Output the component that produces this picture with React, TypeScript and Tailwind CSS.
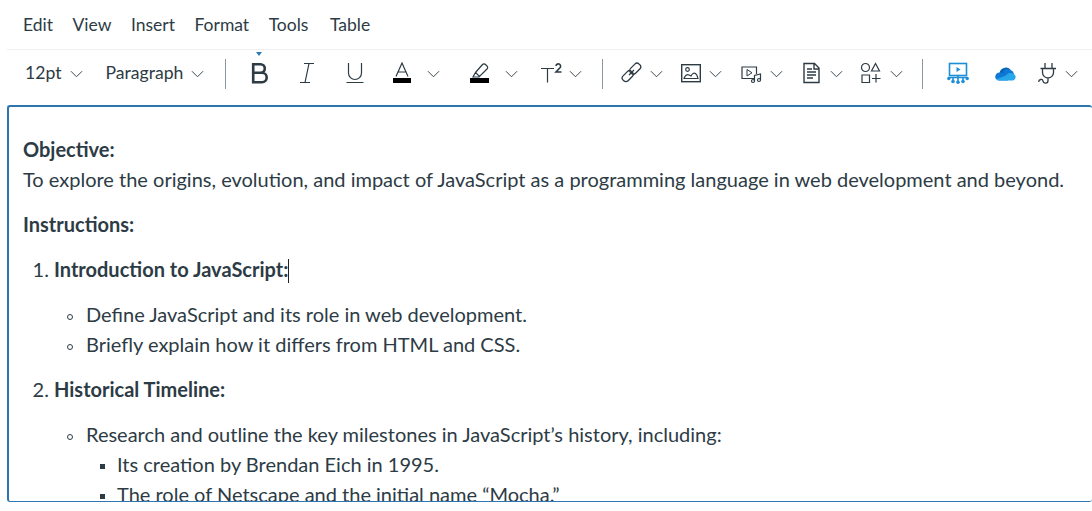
import { ReactNode } from 'react';

const Chevron = ({ className = '' }: { className?: string }) => (
  <svg viewBox="0 0 14 8" className={`w-[13px] h-[8px] shrink-0 ${className}`} fill="none" stroke="#2d3b45" strokeWidth="1">
    <path d="M1 1l6 6 6-6" />
  </svg>
);

const Divider = ({ className = '' }: { className?: string }) => (
  <div className={`w-px h-[30px] bg-[#8b969e] shrink-0 ${className}`} />
);

const Icon = ({ w, children, className = '' }: { w: number; children: ReactNode; className?: string }) => (
  <svg width={w} height={24} viewBox={`0 0 ${w} 24`} fill="none" stroke="#2d3b45" strokeWidth="1.2" className={`shrink-0 ${className}`}>
    {children}
  </svg>
);

// list items with the small bullets the editor draws
const CircleItem = ({ children }: { children: ReactNode }) => (
  <li className="relative list-none">
    <span className="absolute -left-[19px] top-[15px] w-[6px] h-[6px] rounded-full border border-[#2d3b45]" />
    {children}
  </li>
);

const SquareItem = ({ children }: { children: ReactNode }) => (
  <li className="relative list-none">
    <span className="absolute -left-[17px] top-[15px] w-[5px] h-[5px] bg-[#2d3b45]" />
    {children}
  </li>
);

export default function App() {
  return (
    <div className="w-[1092px] h-[511px] overflow-hidden bg-white pl-[7px] text-[#2d3b45] font-['Lato',sans-serif]">
      {/* Menu bar */}
      <div className="h-[50px] border-b border-[#eef0f1] flex items-center pl-[16px] pt-[1px] gap-[19.5px] text-[17.5px]">
        <span>Edit</span>
        <span>View</span>
        <span>Insert</span>
        <span>Format</span>
        <span>Tools</span>
        <span className="ml-[2px]">Table</span>
      </div>

      {/* Toolbar */}
      <div className="h-[55px] flex items-center text-[17.6px] pb-[8px] whitespace-nowrap">
        <span className="ml-[18px]">12pt</span>
        <Chevron className="ml-[9px]" />
        <span className="ml-[22px]">Paragraph</span>
        <Chevron className="ml-[8px]" />
        <Divider className="ml-[21px]" />

        {/* Bold */}
        <div className="relative ml-[25px] w-[17px] h-[24px]">
          <div className="absolute left-[5px] -top-[10px] w-0 h-0 border-x-[3px] border-x-transparent border-t-[4px] border-t-[#2d7ab8]" />
          <Icon w={17}>
            <path d="M2.200 2.200h7.300a4.200 4.200 0 0 1 0 8.600H2.200zM2.200 10.800h8.800a4.600 4.600 0 0 1 0 9.400H2.200z" strokeWidth="2.600" />
          </Icon>
        </div>
        <Icon w={16} className="ml-[31px]">
          <path d="M5 1.500h10M1 20.500h10M10 1.500L6 20.500" />
        </Icon>
        <Icon w={18} className="ml-[31px]">
          <path d="M2.500 1v10a6.500 6.500 0 0 0 13 0V1M0.500 20.500h17" />
        </Icon>

        {/* Text colour */}
        <svg width="18" height="24" viewBox="0 0 18 24" fill="none" stroke="#2d3b45" strokeWidth="1.200" className="ml-[29px] shrink-0">
          <path d="M3 14.500L9 1 15 14.500M5 10h8" />
          <rect x="0" y="16" width="18" height="5" fill="#000" stroke="none" />
        </svg>
        <Chevron className="ml-[16px]" />

        {/* Highlight */}
        <svg width="19" height="24" viewBox="0 0 19 24" fill="none" stroke="#2d3b45" strokeWidth="1.200" className="ml-[30px] shrink-0">
          <path d="M5.500 10.500L12.500 2.500a2 2 0 0 1 3 0l1.500 1.500a2 2 0 0 1 0 3L9.500 14.500zM5.500 10.500L3 15h6.500" />
          <rect x="0" y="16" width="19" height="5" fill="#000" stroke="none" />
        </svg>
        <Chevron className="ml-[16px]" />

        {/* Superscript */}
        <svg width="22" height="24" viewBox="0 0 22 24" fill="none" stroke="#2d3b45" strokeWidth="1.200" className="ml-[23px] shrink-0">
          <path d="M0 6.500h13M6.500 6.500V20.500" />
          <path d="M15 4a2.300 2.300 0 1 1 4.200 1.500L15 10h5.500" strokeWidth="1.600" />
        </svg>
        <Chevron className="ml-[6px]" />
        <Divider className="ml-[20px]" />

        {/* Link */}
        <svg width="21" height="24" viewBox="0 0 21 24" fill="none" stroke="#2d3b45" strokeWidth="1.300" className="ml-[18px] shrink-0">
          <rect x="0.700" y="10.700" width="12" height="7" rx="3" transform="rotate(-45 6.700 14.200)" />
          <rect x="8.200" y="3.200" width="12" height="7" rx="3" transform="rotate(-45 14.200 6.700)" />
          <path d="M8 13l5-5" />
        </svg>
        <Chevron className="ml-[8px]" />

        {/* Image */}
        <Icon w={20} className="ml-[18px]">
          <rect x="0.700" y="2.700" width="18.600" height="17" strokeWidth="1.400" />
          <circle cx="6.500" cy="7.500" r="1.800" />
          <path d="M3 16.500c1-3 3-4.500 5-3.500l2 1c1-2.500 3-3.500 4.500-2.500s2 2.500 2.500 5z" />
        </Icon>
        <Chevron className="ml-[8px]" />

        {/* Media */}
        <Icon w={21} className="ml-[19px]">
          <path d="M13 16.500H1V5h14.500v7" />
          <path d="M6 7.500v6.500l5-3.250z" strokeWidth="1" />
          <circle cx="12" cy="19" r="1.500" />
          <circle cx="18" cy="18" r="1.500" />
          <path d="M13.500 19v-5.500l6-1.500v6" />
        </Icon>
        <Chevron className="ml-[8px]" />

        {/* Document */}
        <Icon w={17} className="ml-[20px]">
          <path d="M1 1.500h10.500L16 6v14.500H1zM11 1.500V7h5" strokeWidth="1.400" />
          <path d="M4 7h5M4 10h9M4 13h9M4 16h6" strokeWidth="1.700" />
        </Icon>
        <Chevron className="ml-[10px]" />

        {/* Apps */}
        <Icon w={20} className="ml-[18px]">
          <circle cx="4.500" cy="5.500" r="4" />
          <path d="M14.500 1.500l4 7.500h-8zM1 13h7.500v7.500H1zM15 12v8.500M11 16.500h8.500" />
        </Icon>
        <Chevron className="ml-[9px]" />
        <Divider className="ml-[19px]" />

        {/* Studio */}
        <svg width="22" height="24" viewBox="0 0 22 24" fill="none" stroke="#1c8fd6" strokeWidth="1.600" className="ml-[24px] shrink-0">
          <rect x="2.500" y="1.500" width="17" height="12" />
          <path d="M9.500 5v5l4-2.500z" fill="#1c8fd6" stroke="none" />
          <path d="M1.500 15.500h19M11 13.500v7M6 15.500v3M16 15.500v3" />
          <circle cx="1.800" cy="16.500" r="1.700" fill="#1c8fd6" stroke="none" />
          <circle cx="20.200" cy="16.500" r="1.700" fill="#1c8fd6" stroke="none" />
          <circle cx="6" cy="19.500" r="1.800" fill="#1c8fd6" stroke="none" />
          <circle cx="11" cy="20.300" r="1.800" fill="#1c8fd6" stroke="none" />
          <circle cx="16" cy="19.500" r="1.800" fill="#1c8fd6" stroke="none" />
        </svg>

        {/* OneDrive */}
        <svg width="21" height="14" viewBox="0 0 21 14" className="ml-[26px] shrink-0">
          <path d="M4.500 6a6.500 6.500 0 0 1 11-3.500L12 9z" fill="#0364b8" />
          <path d="M8 4.500a5 5 0 0 1 7.500-1.500 5 5 0 0 1 3.500 4L12 10z" fill="#0f78d4" />
          <path d="M5 5.500c-6 0-6.500 8-.5 8h8.500L14 7z" fill="#0f78d4" />
          <path d="M10 9l4-3c2-.5 6 .5 6.500 3 .5 2.500-1 4.500-3.500 4.500H4.500c-1.500 0-2.500-.5-3-1.500z" fill="#28a8ea" />
        </svg>

        {/* Plug */}
        <svg width="20" height="24" viewBox="0 0 20 24" fill="none" stroke="#2d3b45" strokeWidth="1.300" className="ml-[22px] shrink-0">
          <path d="M7 1v5.500M14 1v5.500M2.500 6.500h15.500M4.500 6.500v4a5.500 5.500 0 0 0 11 0v-4M10 16v2.500c0 3.500-4.500 3.500-5 .5-.4-2.300-4.300-2-4.300 1" />
        </svg>
        <Chevron className="ml-[7px]" />
      </div>

      {/* Editor area */}
      <div className="h-[397px] overflow-hidden border-2 border-r-0 border-b-[1.5px] border-[#2d76b2] rounded-[3px] pl-[14px] pt-[27px] text-[20px] leading-[30px]">
        <p className="h-[30px]"><strong>Objective:</strong></p>
        <p className="whitespace-nowrap">To explore the origins, evolution, and impact of JavaScript as a programming language in web development and beyond.</p>
        <p className="mt-[15px]"><strong>Instructions:</strong></p>
        <ol className="list-decimal pl-[31px] mt-[15px]">
          <li>
            <strong>Introduction to JavaScript:</strong>
            <span className="inline-block w-px h-[24px] bg-[#222] align-[-6px]" />
            <ul className="pl-[32px] mt-[15px] mb-[15px]">
              <CircleItem>Define JavaScript and its role in web development.</CircleItem>
              <CircleItem>Briefly explain how it differs from HTML and CSS.</CircleItem>
            </ul>
          </li>
          <li>
            <strong>Historical Timeline:</strong>
            <ul className="pl-[32px] mt-[15px]">
              <CircleItem>
                Research and outline the key milestones in JavaScript’s history, including:
                <ul className="pl-[31px]">
                  <SquareItem>Its creation by Brendan Eich in 1995.</SquareItem>
                  <SquareItem>The role of Netscape and the initial name “Mocha.”</SquareItem>
                </ul>
              </CircleItem>
            </ul>
          </li>
        </ol>
      </div>
    </div>
  );
}
